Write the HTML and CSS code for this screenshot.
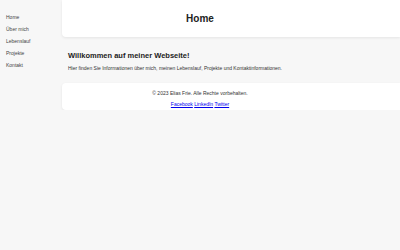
FILE: index.html
```html
<!DOCTYPE html>
<html lang="de">
<head>
<meta charset="utf-8">
<title>Home</title>
<link rel="stylesheet" href="styles.css">
</head>
<body>
<div class="page">
  <aside class="sidebar">
    <ul class="nav">
      <li>Home</li>
      <li>Über mich</li>
      <li>Lebenslauf</li>
      <li>Projekte</li>
      <li>Kontakt</li>
    </ul>
  </aside>
  <div class="content">
    <header class="header">
      <h1 class="title">Home</h1>
    </header>
    <main class="main">
      <h2 class="welcome">Willkommen auf meiner Webseite!</h2>
      <p class="intro">Hier finden Sie Informationen über mich, meinen Lebenslauf, Projekte und Kontaktinformationen.</p>
    </main>
    <footer class="footer">
      <p class="copy">© 2023 Elias Frie. Alle Rechte vorbehalten.</p>
      <div class="links"><a href="#">Facebook</a> <a href="#">LinkedIn</a> <a href="#">Twitter</a></div>
    </footer>
  </div>
</div>
</body>
</html>
```
FILE: styles.css
```css
html, body {
  margin: 0;
  padding: 0;
}
body {
  background: #f7f7f7;
  font-family: "Liberation Sans", Arial, sans-serif;
  font-size: 5px;
  color: #333;
}
.page {
  display: flex;
  align-items: flex-start;
}
.sidebar {
  width: 62px;
  flex: none;
}
.nav {
  list-style: none;
  margin: 0;
  padding: 11px 0 0 6px;
}
.nav li {
  padding: 3px 0;
  color: #444;
}
.content {
  flex: 1;
  display: flex;
  flex-direction: column;
}
.header {
  background: #fff;
  border-radius: 0 0 0 4px;
  box-shadow: 0 1px 3px rgba(0, 0, 0, 0.08);
  padding: 12.75px 62px 12.75px 0;
  text-align: center;
}
.title {
  margin: 0;
  font-size: 10px;
  color: #222;
}
.main {
  padding: 14px 6px 12px;
}
.welcome {
  margin: 0 0 5.4px;
  font-size: 7.5px;
  color: #222;
}
.intro {
  margin: 0;
}
.footer {
  background: #fff;
  border-radius: 4px 0 0 4px;
  box-shadow: 0 1px 3px rgba(0, 0, 0, 0.08);
  padding: 7px 62px 3.75px 0;
  text-align: center;
}
.copy {
  margin: 0 0 4.75px;
}
.links a {
  color: #0000ee;
}
```
